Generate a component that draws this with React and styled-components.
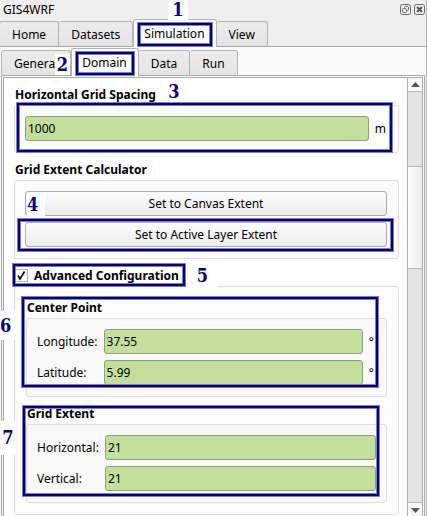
import React, { useState } from "react";
import styled, { createGlobalStyle, css } from "styled-components";

const GlobalStyle = createGlobalStyle`
  *, *::before, *::after { box-sizing: border-box; }
  body { margin: 0; background: #efefef; }
  body, button, input { font-family: "Noto Sans", "Open Sans", sans-serif; font-size: 12px; color: #000; }
`;

const Dock = styled.main`
  display: flex;
  flex-direction: column;
  height: 100vh;
  overflow: hidden;
  border-right: 1px solid #b4b4b4;
`;

const TitleBar = styled.header`
  position: relative;
  display: flex;
  align-items: center;
  gap: 3px;
  height: 19px;
  flex: none;
  padding: 0 1px 0 3px;
`;

const Title = styled.h1`
  flex: 1;
  margin: 0;
  font-size: 12px;
  font-weight: 400;
`;

const TitleButton = styled.button`
  display: flex;
  width: 11px;
  height: 11px;
  padding: 0;
  border: 0;
  background: none;
`;

const TabBar = styled.div`
  display: flex;
  align-items: flex-end;
  flex: none;
  height: 28px;
  margin-left: ${(p) => (p.$inner ? "0" : "-1px")};
  box-shadow: inset 0 -1px 0 #a8a8a8;
`;

const Tab = styled.button`
  position: relative;
  height: 26px;
  padding: 0 12px;
  border: 1px solid #b4b4b4;
  border-left-width: ${(p) => (p.$joined ? "0" : "1px")};
  border-bottom-color: #a8a8a8;
  border-radius: 3px 3px 0 0;
  background: linear-gradient(#ececec, #e4e4e4);
  white-space: nowrap;
  ${(p) =>
    p.$active &&
    css`
      height: 28px;
      padding: 0 11px 1px 10px;
      border-left-width: 1px;
      border-bottom: 0;
      background: #fdfdfd;
    `}
`;

const TabPage = styled.section`
  display: flex;
  flex-direction: column;
  flex: 1;
  min-height: 0;
  padding: 1px 1px 0 1px;
  background: #fbfbfb;
`;

const PageFrame = styled.div`
  display: flex;
  flex: 1;
  min-height: 0;
  padding: 1px 1px 0;
  border: solid #a8a8a8;
  border-width: 0 1px;
`;

const ScrollArea = styled.div`
  display: flex;
  flex: 1;
  min-width: 0;
  border: solid #a8a8a8;
  border-width: 1px 1px 0;
  background: #fff;
`;

const Content = styled.form`
  flex: 1;
  min-width: 0;
  padding: 0 8px 1px 10px;
`;

const ScrollBar = styled.div`
  display: flex;
  flex-direction: column;
  flex: none;
  width: 15px;
  border-left: 1px solid #b0b0b0;
  background: #e4e4e4;
`;

const ScrollButton = styled.button`
  display: flex;
  align-items: center;
  justify-content: center;
  flex: none;
  height: 14px;
  padding: 0;
  border: solid #b8b8b8;
  border-width: ${(p) => (p.$down ? "1px 0 0" : "0 0 1px")};
  background: #f8f8f8;
`;

const Track = styled.div`
  display: grid;
  grid-template-rows: 75fr 103fr 235fr;
  flex: 1;
`;

const Thumb = styled.div`
  grid-row: 2;
  border: solid #b8b8b8;
  border-width: 1px 0;
  background: linear-gradient(90deg, #fbfbfb, #efefef);
`;

const Group = styled.section`
  position: relative;
  padding-top: 6px;
`;

const GroupTitle = styled.h2`
  display: flex;
  align-items: center;
  gap: 6px;
  height: 21px;
  margin: 0;
  padding-left: 1px;
  font-size: 12px;
  font-weight: 700;
`;

const TickBox = styled.input`
  appearance: none;
  width: 13px;
  height: 13px;
  margin: 0;
  border: 1px solid #b8b8b8;
  background: #fff;
  &:checked {
    background: #fff
      url("data:image/svg+xml,%3Csvg xmlns='http://www.w3.org/2000/svg' viewBox='0 0 11 11'%3E%3Cpath d='M2 5.500 4 9 8.500 1.500' fill='none' stroke='black' stroke-width='1.600'/%3E%3C/svg%3E");
  }
`;

const Box = styled.div`
  border: 1px solid #dedede;
  border-radius: 3px;
  background: ${(p) => (p.$nested ? "#f9f9f9" : "#fcfcfc")};
  padding: ${(p) => (p.$holdsGroups ? "4px 11px 11px" : "10px 10px 11px")};
`;

const ButtonStack = styled.div`
  display: grid;
  gap: 6px;
  padding-right: 1px;
`;

const Fields = styled.div`
  display: grid;
  grid-template-columns: ${(p) => p.$columns};
  align-items: center;
  gap: 6px;
`;

const PushButton = styled.button`
  position: relative;
  width: 100%;
  height: 25px;
  padding: 0;
  border: 1px solid #adadad;
  border-radius: 3px;
  background: linear-gradient(#fcfcfc, #ececec);
`;

const Field = styled.input`
  width: 100%;
  min-width: 0;
  height: 25px;
  padding: 0 2px;
  border: 1px solid #8fa071;
  border-radius: 3px;
  background: #c4df9b;
  outline: 0;
`;

const Unit = styled.span`
  padding-right: 2px;
`;

const Outline = styled.span`
  position: absolute;
  inset: ${(p) => p.$inset};
  border: 2px solid #000080;
  box-shadow: 0 0 0 1px #8080c0, inset 0 0 0 1px #8080c0;
  pointer-events: none;
  z-index: 2;
`;

const Callout = styled.span`
  position: absolute;
  left: ${(p) => p.$x}px;
  top: ${(p) => p.$y}px;
  z-index: 3;
  display: flex;
  align-items: center;
  justify-content: ${(p) => (p.$start ? "flex-start" : "center")};
  width: ${(p) => p.$w}px;
  height: ${(p) => p.$h}px;
  background: #fff;
  color: #000080;
  font: 700 18px/20px "DejaVu Serif Condensed", "DejaVu Serif", serif;
  pointer-events: none;
`;

function Arrow({ down }) {
  return (
    <svg width="9" height="6" viewBox="0 0 9 6" aria-hidden="true">
      <path d={down ? "M0 1h9L4.500 6z" : "M0 5h9L4.500 0z"} fill="#555" />
    </svg>
  );
}

function FloatIcon() {
  return (
    <svg width="11" height="11" viewBox="0 0 11 11" fill="none" stroke="#666" aria-hidden="true">
      <rect x=".5" y=".5" width="10" height="10" rx="2" />
      <rect x="4.500" y="2.500" width="4" height="4" rx="1" />
      <rect x="2.500" y="4.500" width="4" height="4" rx="1" fill="#efefef" />
    </svg>
  );
}

function CloseIcon() {
  return (
    <svg width="11" height="11" viewBox="0 0 11 11" fill="none" stroke="#666" aria-hidden="true">
      <rect x=".5" y=".5" width="10" height="10" rx="2" />
      <path d="M3 3l5 5M8 3L3 8" stroke="#555" strokeWidth="2" />
    </svg>
  );
}

function NumberField({ id, label, value, unit }) {
  const [text, setText] = useState(value);
  return (
    <>
      {label && <label htmlFor={id}>{label}</label>}
      <Field
        id={id}
        value={text}
        aria-label={label ? undefined : "Horizontal Grid Spacing"}
        onChange={(e) => setText(e.target.value)}
      />
      {unit && <Unit>{unit}</Unit>}
    </>
  );
}

export default function App() {
  const [advanced, setAdvanced] = useState(true);
  return (
    <>
      <GlobalStyle />
      <Dock>
        <TitleBar>
          <Title>GIS4WRF</Title>
          <TitleButton aria-label="Float"><FloatIcon /></TitleButton>
          <TitleButton aria-label="Close"><CloseIcon /></TitleButton>
          <Callout $x={168} $y={0} $w={20} $h={20}>1</Callout>
        </TitleBar>
        <TabBar role="tablist">
          <Tab role="tab">Home</Tab>
          <Tab role="tab" $joined>Datasets</Tab>
          <Tab role="tab" $active aria-selected="true">
            Simulation
            <Outline $inset="3px 4px 1px 4px" />
          </Tab>
          <Tab role="tab" $joined>View</Tab>
        </TabBar>
        <TabPage>
          <TabBar role="tablist" $inner>
            <Tab role="tab">
              General
              <Callout $x={53} $y={3} $w={15} $h={21}>2</Callout>
            </Tab>
            <Tab role="tab" $active aria-selected="true">
              Domain
              <Outline $inset="3px 4px 1px 4px" />
            </Tab>
            <Tab role="tab" $joined>Data</Tab>
            <Tab role="tab" $joined>Run</Tab>
          </TabBar>
          <PageFrame>
            <ScrollArea>
              <Content onSubmit={(e) => e.preventDefault()}>
                <Group>
                  <GroupTitle>Horizontal Grid Spacing</GroupTitle>
                  <Box>
                    <Fields $columns="1fr auto">
                      <NumberField id="spacing" value="1000" unit="m" />
                    </Fields>
                  </Box>
                  <Outline $inset="25px 7px 1px 3px" />
                  <Callout $x={152} $y={4} $w={16} $h={20}>3</Callout>
                </Group>
                <Group>
                  <GroupTitle>Grid Extent Calculator</GroupTitle>
                  <Box>
                    <ButtonStack>
                      <PushButton type="button">
                        Set to Canvas Extent
                        <Callout $x={1} $y={2} $w={18} $h={22} $start>4</Callout>
                      </PushButton>
                      <PushButton type="button">
                        Set to Active Layer Extent
                        <Outline $inset="-4px -7px -5px -8px" />
                      </PushButton>
                    </ButtonStack>
                  </Box>
                </Group>
                <Group>
                  <GroupTitle>
                    <TickBox
                      id="advanced"
                      type="checkbox"
                      checked={advanced}
                      onChange={(e) => setAdvanced(e.target.checked)}
                    />
                    <label htmlFor="advanced">Advanced Configuration</label>
                  </GroupTitle>
                  <Outline $inset="5px 214px 229px -1px" />
                  <Callout $x={174} $y={5} $w={29} $h={24}>5</Callout>
                  <Box $holdsGroups>
                    <Group>
                      <GroupTitle>Center Point</GroupTitle>
                      <Box $nested>
                        <Fields $columns="auto 1fr auto">
                          <NumberField id="lon" label="Longitude:" value="37.55" unit="°" />
                          <NumberField id="lat" label="Latitude:" value="5.99" unit="°" />
                        </Fields>
                      </Box>
                      <Outline $inset="6px 9px 10px -4px" />
                      <Callout $x={-26} $y={20} $w={17} $h={29} $start>6</Callout>
                    </Group>
                    <Group>
                      <GroupTitle>Grid Extent</GroupTitle>
                      <Box $nested>
                        <Fields $columns="auto 1fr">
                          <NumberField id="horizontal" label="Horizontal:" value="21" />
                          <NumberField id="vertical" label="Vertical:" value="21" />
                        </Fields>
                      </Box>
                      <Outline $inset="9px 8px 7px -3px" />
                      <Callout $x={-26} $y={24} $w={16} $h={34}>7</Callout>
                    </Group>
                  </Box>
                </Group>
              </Content>
              <ScrollBar>
                <ScrollButton type="button" aria-label="Scroll up"><Arrow /></ScrollButton>
                <Track><Thumb /></Track>
                <ScrollButton type="button" aria-label="Scroll down" $down><Arrow down /></ScrollButton>
              </ScrollBar>
            </ScrollArea>
          </PageFrame>
        </TabPage>
      </Dock>
    </>
  );
}
